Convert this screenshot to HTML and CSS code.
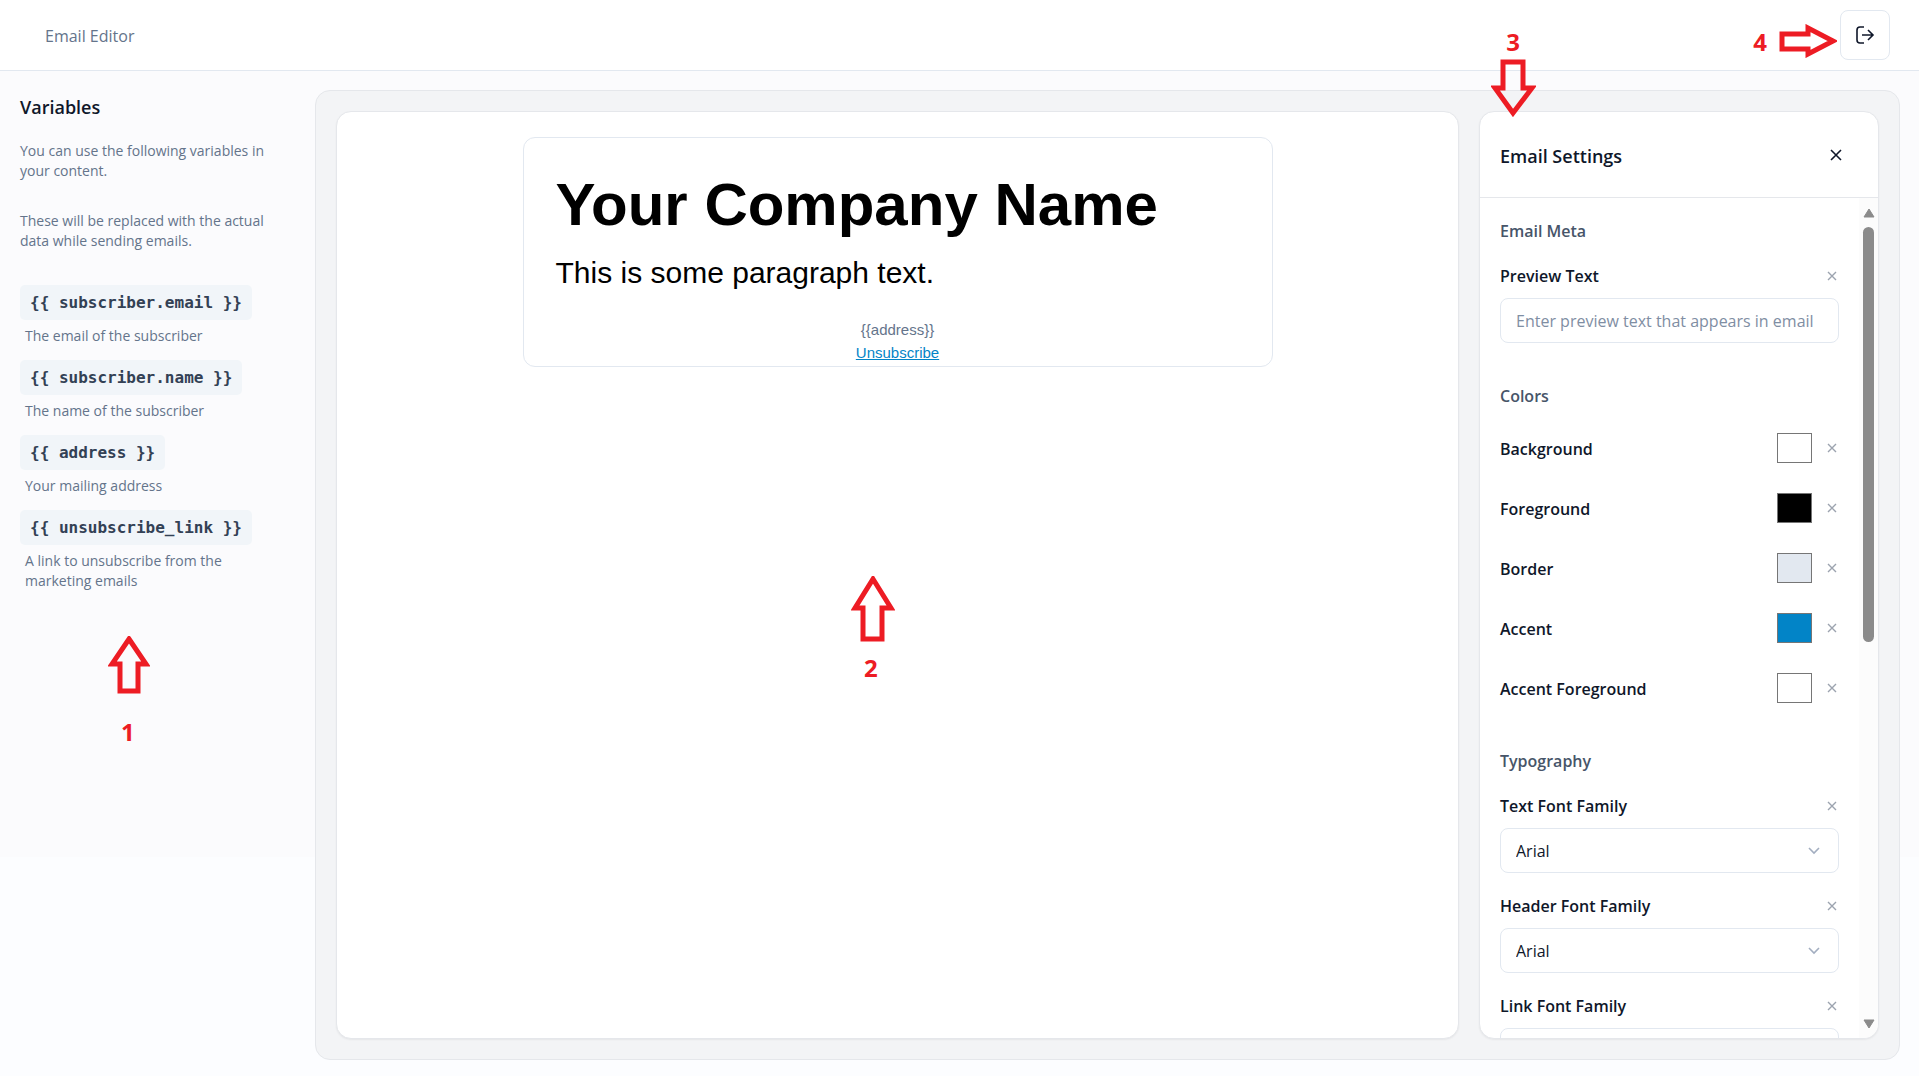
FILE: index.html
```html
<!DOCTYPE html>
<html lang="en">

<head>
   <meta charset="UTF-8">
   <meta name="viewport" content="width=device-width, initial-scale=1.0">
   <title>Email Editor</title>
   <link rel="stylesheet" href="styles.css">
</head>

<body>
   <header class="topbar">
      <span class="topbar-title">Email Editor</span>
      <button class="exit-btn" type="button" aria-label="Exit">
         <svg width="20" height="20" viewBox="0 0 20 20" fill="none" stroke="currentColor">
            <path d="M9 2H5Q2 2 2 5V15Q2 18 5 18H9" />
            <path d="M7 10H18M13 5L18 10L13 15" />
         </svg>
      </button>
   </header>

   <div class="layout">
      <aside class="sidebar">
         <h2 class="sidebar-title">Variables</h2>
         <p class="hint">You can use the following variables in your content.</p>
         <p class="hint">These will be replaced with the actual data while sending emails.</p>

         <ul class="variables">
            <li>
               <code>{{ subscriber.email }}</code>
               <p>The email of the subscriber</p>
            </li>
            <li>
               <code>{{ subscriber.name }}</code>
               <p>The name of the subscriber</p>
            </li>
            <li>
               <code>{{ address }}</code>
               <p>Your mailing address</p>
            </li>
            <li>
               <code>{{ unsubscribe_link }}</code>
               <p>A link to unsubscribe from the marketing emails</p>
            </li>
         </ul>
      </aside>

      <main class="workspace">
         <section class="canvas">
            <article class="email">
               <h1>Your Company Name</h1>
               <p class="email-text">This is some paragraph text.</p>
               <footer class="email-footer">
                  <div>{{address}}</div>
                  <a href="#">Unsubscribe</a>
               </footer>
            </article>
         </section>

         <section class="settings">
            <div class="settings-header">
               <h2>Email Settings</h2>
               <button class="close-btn" type="button" aria-label="Close">
                  <svg width="12" height="12" viewBox="0 0 12 12" stroke="currentColor"><path d="M1 1L11 11M11 1L1 11" /></svg>
               </button>
            </div>

            <div class="settings-body">
               <form class="settings-form">
                  <h3>Email Meta</h3>
                  <div class="field">
                     <div class="field-head">
                        <label for="preview">Preview Text</label>
                        <button class="reset" type="button" aria-label="Reset preview text"><svg viewBox="0 0 10 10"><path d="M1 1L9 9M9 1L1 9" /></svg></button>
                     </div>
                     <input class="control" id="preview" type="text" placeholder="Enter preview text that appears in email">
                  </div>

                  <h3>Colors</h3>
                  <div class="colors">
                     <div class="color-row">
                        <label for="c-bg">Background</label>
                        <input id="c-bg" type="color" value="#ffffff">
                        <button class="reset" type="button" aria-label="Reset background"><svg viewBox="0 0 10 10"><path d="M1 1L9 9M9 1L1 9" /></svg></button>
                     </div>
                     <div class="color-row">
                        <label for="c-fg">Foreground</label>
                        <input id="c-fg" type="color" value="#000000">
                        <button class="reset" type="button" aria-label="Reset foreground"><svg viewBox="0 0 10 10"><path d="M1 1L9 9M9 1L1 9" /></svg></button>
                     </div>
                     <div class="color-row">
                        <label for="c-border">Border</label>
                        <input id="c-border" type="color" value="#e2e8f0">
                        <button class="reset" type="button" aria-label="Reset border"><svg viewBox="0 0 10 10"><path d="M1 1L9 9M9 1L1 9" /></svg></button>
                     </div>
                     <div class="color-row">
                        <label for="c-accent">Accent</label>
                        <input id="c-accent" type="color" value="#0284c7">
                        <button class="reset" type="button" aria-label="Reset accent"><svg viewBox="0 0 10 10"><path d="M1 1L9 9M9 1L1 9" /></svg></button>
                     </div>
                     <div class="color-row">
                        <label for="c-accent-fg">Accent Foreground</label>
                        <input id="c-accent-fg" type="color" value="#ffffff">
                        <button class="reset" type="button" aria-label="Reset accent foreground"><svg viewBox="0 0 10 10"><path d="M1 1L9 9M9 1L1 9" /></svg></button>
                     </div>
                  </div>

                  <h3>Typography</h3>
                  <div class="field">
                     <div class="field-head">
                        <label for="f-text">Text Font Family</label>
                        <button class="reset" type="button" aria-label="Reset text font"><svg viewBox="0 0 10 10"><path d="M1 1L9 9M9 1L1 9" /></svg></button>
                     </div>
                     <div class="select">
                        <select class="control" id="f-text"><option>Arial</option></select>
                        <svg viewBox="0 0 12 8"><path d="M1 1L6 6L11 1" /></svg>
                     </div>
                  </div>
                  <div class="field">
                     <div class="field-head">
                        <label for="f-header">Header Font Family</label>
                        <button class="reset" type="button" aria-label="Reset header font"><svg viewBox="0 0 10 10"><path d="M1 1L9 9M9 1L1 9" /></svg></button>
                     </div>
                     <div class="select">
                        <select class="control" id="f-header"><option>Arial</option></select>
                        <svg viewBox="0 0 12 8"><path d="M1 1L6 6L11 1" /></svg>
                     </div>
                  </div>
                  <div class="field">
                     <div class="field-head">
                        <label for="f-link">Link Font Family</label>
                        <button class="reset" type="button" aria-label="Reset link font"><svg viewBox="0 0 10 10"><path d="M1 1L9 9M9 1L1 9" /></svg></button>
                     </div>
                     <div class="select">
                        <select class="control" id="f-link"><option>Arial</option></select>
                        <svg viewBox="0 0 12 8"><path d="M1 1L6 6L11 1" /></svg>
                     </div>
                  </div>
               </form>

               <div class="scrollbar" aria-hidden="true">
                  <svg viewBox="0 0 12 10"><path d="M6 1L11 9H1Z" /></svg>
                  <div class="scroll-track">
                     <div class="scroll-thumb"></div>
                  </div>
                  <svg viewBox="0 0 12 10"><path d="M6 9L1 1H11Z" /></svg>
               </div>
            </div>
         </section>
      </main>
   </div>

   <!-- numbered callouts -->
   <svg class="arrow arrow-1" width="42" height="58" viewBox="0 0 42 58"><path d="M21 3L38 28H30V55H12V28H4Z" /></svg>
   <span class="num num-1">1</span>
   <svg class="arrow arrow-2" width="44" height="66" viewBox="0 0 44 66"><path d="M22 3L40 32H31V63H12V32H4Z" /></svg>
   <span class="num num-2">2</span>
   <svg class="arrow arrow-3" width="45" height="58" viewBox="0 0 45 58"><path d="M12 3H32V29H41L22 54L4 29H12Z" /></svg>
   <span class="num num-3">3</span>
   <svg class="arrow arrow-4" width="58" height="34" viewBox="0 0 58 34"><path d="M3 10H29V4L54 17L29 30V25H3Z" /></svg>
   <span class="num num-4">4</span>
</body>

</html>
```

FILE: styles.css
```css
* {
   box-sizing: border-box;
}

body {
   margin: 0;
   height: 100vh;
   display: flex;
   flex-direction: column;
   overflow: hidden;
   font-family: "Open Sans", "Noto Sans", sans-serif;
   font-size: 16px;
   line-height: 24px;
   color: #0f172a;
   background: linear-gradient(#fbfbfd 0 857px, #fcfdff 857px);
}

h1,
h2,
h3,
p,
ul {
   margin: 0;
   padding: 0;
}

button {
   padding: 0;
   border: none;
   background: none;
   color: inherit;
   cursor: pointer;
}

.topbar {
   display: flex;
   align-items: center;
   justify-content: space-between;
   padding: 10px 29px 10px 45px;
   background: #fff;
   border-bottom: 1px solid #e2e8f0;
}

.topbar-title {
   padding-top: 2px;
   font-size: 16px;
   color: #64748b;
}

.exit-btn {
   width: 50px;
   height: 50px;
   display: flex;
   align-items: center;
   justify-content: center;
   border: 1px solid #e2e8f0;
   border-radius: 8px;
}

.exit-btn svg,
.close-btn svg {
   stroke-width: 1.6;
}

.layout {
   flex: 1;
   min-height: 0;
   display: flex;
}

.sidebar {
   width: 315px;
   padding: 20px;
}

.sidebar-title {
   margin-bottom: 18px;
   font-size: 18px;
   font-weight: 600;
   line-height: 32px;
}

.hint {
   margin-bottom: 30px;
   font-size: 14px;
   line-height: 20px;
   color: #64748b;
}

.variables {
   list-style: none;
   display: grid;
   gap: 14px;
   padding-top: 4px;
}

.variables code {
   display: inline-block;
   padding: 0 10px;
   border-radius: 5px;
   background: #f1f5f9;
   color: #334155;
   font: bold 16px/35px "DejaVu Sans Mono", monospace;
   vertical-align: top;
}

.variables p {
   padding: 6px 5px 0;
   font-size: 14px;
   line-height: 20px;
   color: #64748b;
}

.workspace {
   flex: 1;
   min-width: 0;
   display: flex;
   gap: 20px;
   margin: 19px 19px 16px 0;
   padding: 20px;
   border: 1px solid #e5e7eb;
   border-radius: 15px;
   background: #f3f4f6;
}

.canvas,
.settings {
   border: 1px solid #e5e7eb;
   border-radius: 15px;
   background: #fff;
   box-shadow: 0 1px 2px rgba(0, 0, 0, 0.06);
}

.canvas {
   flex: 1;
   padding: 25px;
}

.email {
   max-width: 750px;
   margin: 0 auto;
   padding: 31px 32px 2px;
   border: 1px solid #e2e8f0;
   border-radius: 12px;
   color: #000;
   font-family: "Liberation Sans", Arial, sans-serif;
}

.email h1 {
   font-size: 60px;
   line-height: 72px;
}

.email-text {
   padding-top: 9px;
   font-size: 30px;
   line-height: 45px;
}

.email-footer {
   padding-top: 23px;
   font-size: 15px;
   line-height: 23px;
   text-align: center;
   color: #64748b;
}

.email-footer a {
   color: #0284c7;
}

.settings {
   width: 400px;
   display: flex;
   flex-direction: column;
   overflow: hidden;
}

.settings-header {
   display: flex;
   align-items: center;
   justify-content: space-between;
   height: 86px;
   padding: 0 36px 0 20px;
   border-bottom: 1px solid #e5e7eb;
}

.settings-header h2 {
   padding-top: 2px;
   font-size: 18px;
   font-weight: 600;
}

.close-btn {
   display: flex;
}

.settings-body {
   flex: 1;
   min-height: 0;
   display: flex;
}

.settings-form {
   flex: 1;
   padding: 20px 20px 40px;
   overflow-y: auto;
   scrollbar-width: none;
}

.settings-form h3 {
   font-size: 16px;
   font-weight: 600;
   line-height: 27px;
   color: #475569;
}

.settings-form label {
   flex: 1;
   padding-top: 2px;
   font-size: 16px;
   font-weight: 600;
   line-height: 25px;
   color: #0f172a;
}

.field {
   padding: 17px 0 10px;
}

.field + .field {
   padding-top: 9px;
}

.field + h3 {
   padding-top: 30px;
}

.field-head {
   display: flex;
   align-items: center;
   margin-bottom: 9px;
}

.reset {
   padding: 0 2px;
}

.reset svg {
   display: block;
   width: 10px;
   height: 10px;
   stroke: #9ca3af;
   stroke-width: 1.4;
}

.control {
   display: block;
   width: 100%;
   height: 45px;
   padding: 0 15px;
   border: 1px solid #e2e8f0;
   border-radius: 8px;
   background: #fff;
   color: #0f172a;
   font: 16px/24px "Open Sans", "Noto Sans", sans-serif;
   appearance: none;
}

.control::placeholder {
   color: #7f8ea3;
}

.select {
   position: relative;
}

.select svg {
   position: absolute;
   right: 19px;
   top: 19px;
   width: 12px;
   height: 8px;
   fill: none;
   stroke: #a3aec0;
   stroke-width: 1.6;
   pointer-events: none;
}

.colors {
   display: grid;
   gap: 30px;
   padding: 23px 0 45px;
}

.color-row {
   display: flex;
   align-items: center;
}

.color-row input {
   width: 35px;
   height: 30px;
   margin-right: 13px;
   padding: 0;
   border: none;
   background: none;
   appearance: none;
}

.color-row input::-webkit-color-swatch-wrapper {
   padding: 0;
}

.color-row input::-webkit-color-swatch {
   border: 1px solid #767676;
   border-radius: 0;
}

.scrollbar {
   width: 19px;
   display: flex;
   flex-direction: column;
   align-items: center;
   gap: 9px;
   padding: 10px 0 9px;
   background: #fcfcfc;
}

.scrollbar svg {
   width: 12px;
   height: 10px;
   fill: #8b8b8b;
   stroke: #8b8b8b;
   stroke-linejoin: round;
}

.scroll-track {
   flex: 1;
}

.scroll-thumb {
   width: 11px;
   height: 53%;
   border-radius: 6px;
   background: #8b8b8b;
}

.arrow,
.num {
   position: absolute;
   pointer-events: none;
}

.arrow {
   fill: none;
   stroke: #ed1c24;
   stroke-width: 5;
}

.num {
   font-size: 24px;
   font-weight: 700;
   color: #ed1c24;
}

.arrow-1 {
   left: 108px;
   top: 636px;
}

.num-1 {
   left: 121px;
   top: 720px;
}

.arrow-2 {
   left: 851px;
   top: 576px;
}

.num-2 {
   left: 864px;
   top: 656px;
}

.arrow-3 {
   right: 383px;
   top: 59px;
}

.num-3 {
   right: 399px;
   top: 30px;
}

.arrow-4 {
   right: 82px;
   top: 24px;
}

.num-4 {
   right: 152px;
   top: 30px;
}
```
